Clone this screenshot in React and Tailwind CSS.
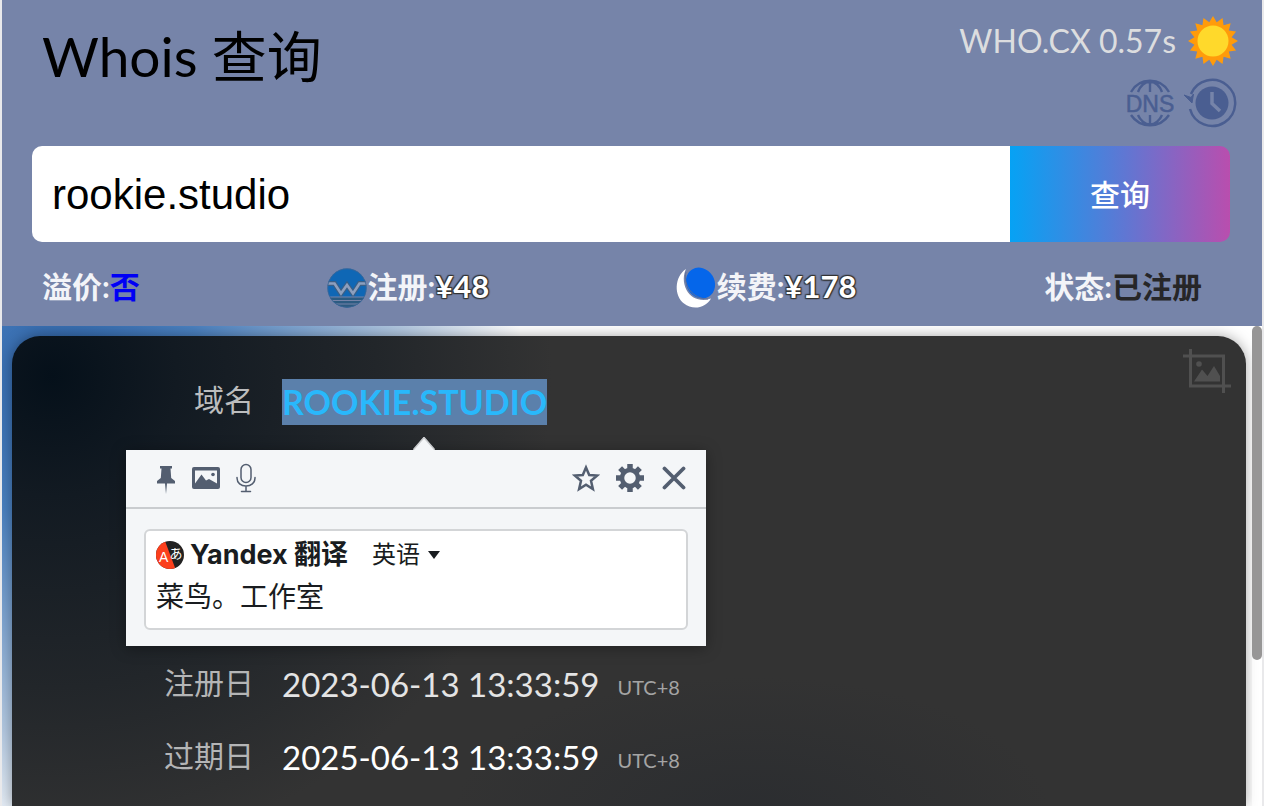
import React from 'react';

const LATIN = "font-['Lato','Noto_Sans_CJK_SC',sans-serif]";

const sunRays = Array.from({ length: 32 }, (_, i) => {
    const angle = (i * Math.PI) / 16 - Math.PI / 2;
    const r = i % 2 === 0 ? 25 : 19;
    return `${25 + r * Math.cos(angle)},${25 + r * Math.sin(angle)}`;
}).join(' ');

const SunIcon = () => (
    <svg viewBox="0 0 50 50" className="size-[50px]" aria-hidden="true">
        <polygon points={sunRays} fill="#ff9b0b" />
        <circle cx="25" cy="25" r="15.5" fill="#ffd92b" />
    </svg>
);

const DnsIcon = () => (
    <svg viewBox="0 0 48 48" className="size-12" fill="none" stroke="#4a5e91" strokeWidth="2.4" aria-hidden="true">
        <path d="M5 13C9 6 16 1.800 24 1.800S39 6 43 13M12 13C14 7 19 2.500 24 2.500S34 7 36 13M24 2V13" />
        <path d="M5 36C9 42 16 46.200 24 46.200S39 42 43 36M12 36C14 41 19 45.500 24 45.500S34 41 36 36M24 46V36" />
        <text x="24" y="33" textAnchor="middle" fontSize="23" fontFamily="Liberation Sans, sans-serif" fill="#4a5e91" stroke="#4a5e91" strokeWidth="0.5">DNS</text>
    </svg>
);

const HistoryIcon = () => (
    <svg viewBox="0 0 54 50" className="h-[50px] w-[54px]" fill="none" stroke="#4a5e91" strokeWidth="2.500" aria-hidden="true">
        <path d="M7 16A23 23 0 1 1 6 31" />
        <path d="M0 17L8 25L9.500 16L7 19.500Z" fill="#4a5e91" strokeWidth="1" />
        <circle cx="28" cy="25" r="16.500" fill="#4a5e91" stroke="none" />
        <path d="M28 14V25.500L36 33" stroke="#7684a9" strokeWidth="3.500" />
    </svg>
);

const WestIcon = () => (
    <svg viewBox="0 0 40 40" className="mt-1 size-10" aria-hidden="true">
        <clipPath id="west-disc"><circle cx="20" cy="20" r="19.500" /></clipPath>
        <g clipPath="url(#west-disc)">
            <rect width="40" height="40" fill="#0f67b5" />
            <path d="M0 29H40V40H0Z" fill="#2c5b81" />
            <path d="M0 15.500H7.500L14 25.500L20 17L26 25.500L32.500 15.500H40" fill="none" stroke="#3a5f86" strokeWidth="5" />
            <path d="M0 15.500H7.500L14 25.500L20 17L26 25.500L32.500 15.500H40" fill="none" stroke="#8d9fbd" strokeWidth="2.600" />
            <path d="M0 29H40M0 32.500H40M0 36H40" stroke="#7684a9" strokeWidth="1.200" />
        </g>
        <circle cx="20" cy="20" r="19.200" fill="none" stroke="#3e6694" strokeWidth="0.800" />
    </svg>
);

const MoonIcon = () => (
    <svg viewBox="0 0 40 40" className="mt-1 size-10 overflow-visible" aria-hidden="true">
        <path d="M9 1C-3 9-3 28 7 35.500C15 42 28 41 34 30.500C25 34 14 31 9.500 22C5.500 14 6.500 6 9 1Z" fill="#fff" />
        <ellipse cx="23.500" cy="15" rx="14" ry="16" transform="rotate(-32 23.500 15)" fill="#0566ea" />
        <path d="M9 4C6 17 15 31 31 31" fill="none" stroke="#5e6f98" strokeWidth="1" />
    </svg>
);

const CropImageIcon = () => (
    <svg viewBox="0 0 48 46" className="h-[46px] w-12" fill="none" stroke="#505050" strokeWidth="3" aria-hidden="true">
        <path d="M0 8H40.500V45M7.500 1V38H48" />
        <circle cx="16" cy="16" r="2.800" fill="#505050" stroke="none" />
        <path d="M11 33.500L19 21.500L24.500 28L31 18L37 28V33.500Z" fill="#505050" stroke="none" />
    </svg>
);

const PinIcon = () => (
    <svg viewBox="0 0 20 28" className="h-7 w-5" fill="#535e70" aria-hidden="true">
        <path d="M4 0H16V2.500H14.500L15.200 12L19 15V17.500H11L10 28L9 17.500H1V15L4.800 12L5.500 2.500H4Z" />
    </svg>
);

const PictureIcon = () => (
    <svg viewBox="0 0 28 22" className="h-[22px] w-7" aria-hidden="true">
        <rect width="28" height="22" rx="2" fill="#535e70" />
        <path d="M3 3.500H25V16.500L17 12L14 13.500L9.500 7.500L3 16.500Z" fill="#f4f6f8" />
        <circle cx="21" cy="7.500" r="1.800" fill="#535e70" />
    </svg>
);

const MicIcon = () => (
    <svg viewBox="0 0 20 30" className="h-[30px] w-5" fill="none" stroke="#535e70" strokeWidth="1.500" strokeLinecap="round" aria-hidden="true">
        <rect x="5" y="1.500" width="10" height="18" rx="5" />
        <path d="M1 14.500V15C1 20 5 23 10 23S19 20 19 15V14.500M10 23V28.500M5.500 28.500H14.500" />
    </svg>
);

const StarIcon = () => (
    <svg viewBox="0 0 28 28" className="size-7" fill="none" stroke="#535e70" strokeWidth="2.500" aria-hidden="true">
        <path d="M14 3.500L17.200 11L25 11.600L19 16.800L20.900 25L14 20.700L7.100 25L9 16.800L3 11.600L10.800 11Z" />
    </svg>
);

const GearIcon = () => (
    <svg viewBox="0 0 28 28" className="size-7" fill="none" stroke="#535e70" aria-hidden="true">
        <circle cx="14" cy="14" r="8" strokeWidth="4.500" />
        <path d="M14 0V5M14 23V28M0 14H5M23 14H28M4.100 4.100L7.600 7.600M20.400 20.400L23.900 23.900M4.100 23.900L7.600 20.400M20.400 7.600L23.900 4.100" strokeWidth="5.500" />
    </svg>
);

const CloseIcon = () => (
    <svg viewBox="0 0 24 24" className="size-6" stroke="#535e70" strokeWidth="3.800" strokeLinecap="round" aria-hidden="true">
        <path d="M2.500 2.500L21.500 21.500M21.500 2.500L2.500 21.500" />
    </svg>
);

const YandexIcon = () => (
    <svg viewBox="0 0 28 28" className="size-7" aria-hidden="true">
        <clipPath id="yandex-disc"><circle cx="14" cy="14" r="14" /></clipPath>
        <g clipPath="url(#yandex-disc)">
            <rect width="28" height="28" fill="#212121" />
            <path d="M0 0H9L19.500 28H0Z" fill="#fb3f1c" />
        </g>
        <text x="3" y="21" fontSize="14" fontFamily="Liberation Sans, sans-serif" fill="#fff">A</text>
        <text x="13.500" y="16.500" fontSize="13" fontFamily="Noto Sans CJK JP, sans-serif" fill="#fff">あ</text>
    </svg>
);

const Price = ({ children }) => (
    <span className="text-[31px] text-white [text-shadow:-1px_-1px_1px_#333,1px_-1px_1px_#333,-1px_1px_1px_#333,1px_1px_1px_#333,0_0_2px_#333]">{children}</span>
);

const TranslatePopup = () => (
    <section aria-label="翻译" className="absolute -left-39 top-full z-10 mt-[25px] w-[580px] bg-[#f4f6f8] text-[#191c20] shadow-[0_2px_14px_rgba(0,0,0,0.35)]">
        <svg viewBox="0 0 22 13" className="absolute -top-[13px] left-[287px] h-[13px] w-[22px]" aria-hidden="true">
            <path d="M0 13L11 0L22 13Z" fill="#f4f6f8" />
            <path d="M0.500 12.500L11 0.500L21.500 12.500" fill="none" stroke="#c8cacc" strokeWidth="1.500" />
        </svg>
        <div className="flex h-[59px] items-center justify-between border-b-2 border-[#c9cccf] pb-px pl-[30px] pr-5">
            <div className="flex items-center gap-4">
                <button type="button" aria-label="固定" className="pt-1"><PinIcon /></button>
                <button type="button" aria-label="图片"><PictureIcon /></button>
                <button type="button" aria-label="语音"><MicIcon /></button>
            </div>
            <div className="flex items-center gap-4">
                <button type="button" aria-label="收藏"><StarIcon /></button>
                <button type="button" aria-label="设置"><GearIcon /></button>
                <button type="button" aria-label="关闭" className="pl-0.5"><CloseIcon /></button>
            </div>
        </div>
        <div className="px-[18px] pb-4 pt-5">
            <div className="h-[101px] rounded-md border-2 border-[#d3d5d7] bg-white px-[10px] pt-1 font-['Inter','Noto_Sans_CJK_SC',sans-serif]">
                <div className="flex h-[41px] items-center">
                    <YandexIcon />
                    <h2 className="ml-[6px] text-[27px] font-bold">Yandex 翻译</h2>
                    <button type="button" className="ml-6 flex items-center gap-2 text-2xl">
                        英语
                        <span className="border-x-[6px] border-t-8 border-x-transparent border-t-[#191c20]"></span>
                    </button>
                </div>
                <p className="text-[28px] leading-[42px]">菜鸟。工作室</p>
            </div>
        </div>
    </section>
);

const DateRow = ({ label, value, tone }) => (
    <div className="flex h-[73px] items-center">
        <dt className="w-[242px] shrink-0 pb-1 text-right text-[30px] text-[#b4b5b6]">{label}</dt>
        <dd className={`ml-7 flex items-center gap-[18px] text-[33px] ${tone}`}>
            {value}
            <span className="pt-1 text-xl text-[#a4a4a4]">UTC+8</span>
        </dd>
    </div>
);

export default function App() {
    return (
        <div className={`flex h-screen flex-col overflow-hidden border-x-2 border-[#e9e9eb] bg-white ${LATIN}`}>
            <header className="flex h-[326px] shrink-0 flex-col bg-[#7684a9]">
                <div className="flex h-[146px] justify-between pl-10 pr-6">
                    <h1 className="pt-[14px] text-[55px] leading-[84px] text-black">Whois 查询</h1>
                    <div className="flex flex-col items-end pt-4">
                        <div className="flex items-center gap-3 text-[32px] leading-[50px] text-[#dcdddf]">
                            WHO.CX 0.57s
                            <SunIcon />
                        </div>
                        <div className="mt-3 flex items-center gap-[10px]">
                            <a href="#dns" aria-label="DNS"><DnsIcon /></a>
                            <a href="#history" aria-label="历史"><HistoryIcon /></a>
                        </div>
                    </div>
                </div>

                <form className="ml-[30px] mr-8 flex h-24 overflow-hidden rounded-[10px]" onSubmit={(e) => e.preventDefault()}>
                    <input
                        type="text"
                        aria-label="域名"
                        defaultValue="rookie.studio"
                        className="min-w-0 flex-1 bg-white px-5 font-['Liberation_Sans',sans-serif] text-[42px] text-black outline-none"
                    />
                    <button type="submit" className="w-[220px] bg-[linear-gradient(90deg,#06a2f4,#5f77d3_52%,#b94eae)] text-[30px] font-medium text-white">查询</button>
                </form>

                <div className="flex h-[84px] items-center justify-between pl-10 pr-[60px] pt-1 text-[30px] font-bold text-[#f3f4f8]">
                    <div>溢价:<span className="text-[#0000f5]">否</span></div>
                    <div className="flex items-center"><WestIcon />注册:<Price>¥48</Price></div>
                    <div className="flex items-center"><MoonIcon />续费:<Price>¥178</Price></div>
                    <div>状态:<span className="text-[#262628]">已注册</span></div>
                </div>
            </header>

            <main className="flex min-h-0 flex-1 overflow-hidden bg-[radial-gradient(ellipse_460px_480px_at_60px_50px,#2f64a8_0%,#4a80bf_30%,#b4c9e1_75%,#fff_100%)] pl-[10px]">
                <div className="mr-[6px] mt-[10px] flex-1 rounded-t-[28px] bg-[radial-gradient(ellipse_300px_140px_at_740px_480px,#2b2d30_0%,transparent_100%),radial-gradient(ellipse_500px_480px_at_40px_40px,#05101a_0%,#121a22_25%,#22262a_65%,#333_100%)] shadow-[0_0_14px_rgba(0,0,0,0.35)]">
                    <div className="relative">
                        <button type="button" aria-label="保存图片" className="absolute right-[15px] top-3"><CropImageIcon /></button>
                        <dl className="pt-[41px]">
                            <div className="flex items-center">
                                <dt className="w-[242px] shrink-0 pb-1 text-right text-[30px] text-[#bcbdbe]">域名</dt>
                                <dd className="relative ml-7">
                                    <a href="#domain" className="block bg-[#5b80ab] text-[34px] font-bold leading-[46px] text-[#29b8fb]">ROOKIE.STUDIO</a>
                                    <TranslatePopup />
                                </dd>
                            </div>
                            <div className="mt-[222px]">
                                <DateRow label="注册日" value="2023-06-13 13:33:59" tone="text-[#e4e4e4]" />
                                <DateRow label="过期日" value="2025-06-13 13:33:59" tone="text-white" />
                            </div>
                        </dl>
                    </div>
                </div>
                <div className="w-[10px] bg-white/60">
                    <div className="h-[334px] rounded-full bg-[#979696]"></div>
                </div>
            </main>
        </div>
    );
}
